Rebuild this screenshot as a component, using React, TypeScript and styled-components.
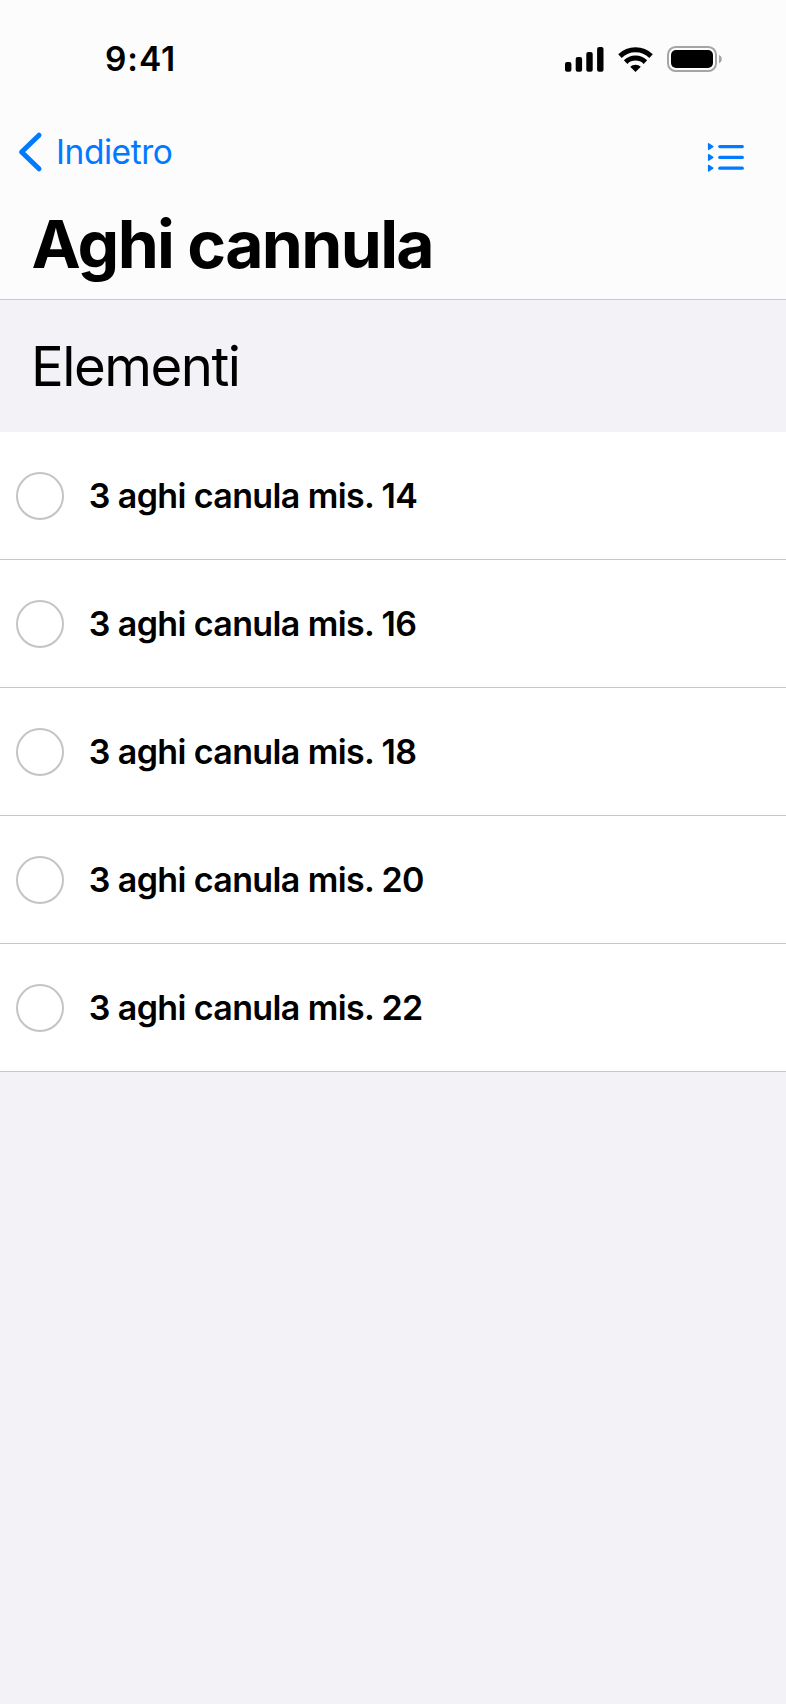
import React, { useState } from 'react';
import styled, { createGlobalStyle } from 'styled-components';

const GlobalStyle = createGlobalStyle`
  *, *::before, *::after { box-sizing: border-box; }
  body {
    margin: 0;
    background: #f2f2f7;
    font-family: Inter, "Liberation Sans", sans-serif;
    color: #000;
  }
`;

const Screen = styled.main`
  display: flex;
  flex-direction: column;
  width: 786px;
  min-height: 1704px;
  background: #f2f2f7;
`;

const Header = styled.header`
  height: 300px;
  background: #fcfcfc;
  border-bottom: 1px solid #c8c8ca;
`;

const StatusBar = styled.div`
  display: flex;
  justify-content: space-between;
  align-items: flex-start;
  height: 130px;
  padding: 36px 64px 0 105px;
`;

const Time = styled.span`
  padding-top: 1px;
  font-size: 33.5px;
  font-weight: 600;
  line-height: 44px;
  letter-spacing: 0.9px;
`;

const StatusIcons = styled.div`
  display: flex;
  gap: 14px;
  padding-top: 10px;

  svg { display: block; }
`;

const NavBar = styled.nav`
  display: flex;
  justify-content: space-between;
  height: 60px;
  padding: 0 42px 0 18px;
  color: #007aff;
`;

const NavButton = styled.button`
  display: flex;
  padding: 0;
  border: 0;
  background: none;
  color: inherit;
  font: inherit;
`;

const BackButton = styled(NavButton)`
  gap: 13px;
  height: 44px;
  align-items: center;
  font-size: 33.5px;
  line-height: 44px;
  letter-spacing: -0.45px;
`;

const ListButton = styled(NavButton)`
  padding-top: 12px;
`;

const Title = styled.h1`
  margin: 14px 0 0;
  padding-left: 31.5px;
  font-size: 66px;
  font-weight: 700;
  line-height: 80px;
  letter-spacing: -1.65px;
`;

const SectionTitle = styled.h2`
  margin: 0;
  padding-left: 31px;
  font-size: 54.5px;
  font-weight: 400;
  line-height: 132px;
  letter-spacing: -1.5px;
`;

const List = styled.ul`
  margin: 0;
  padding: 0;
  list-style: none;
  background: #fff;
`;

const Row = styled.li`
  height: 128px;
  padding: 40px 16px 0;
  border-bottom: 1px solid #c6c6c8;
`;

const RowLabel = styled.label`
  display: flex;
  align-items: center;
  gap: 24.8px;
  font-size: 34px;
  font-weight: 600;
  line-height: 48px;
  letter-spacing: -0.62px;
`;

const Radio = styled.input`
  appearance: none;
  flex: none;
  width: 48px;
  height: 48px;
  margin: 0;
  border: 2px solid #c4c4c6;
  border-radius: 50%;
  background: #fff;

  &:checked { background: #007aff; border-color: #007aff; }
`;

const SignalIcon = () => (
  <svg width="39" height="26" viewBox="0 0 39 26">
    <rect x="0" y="16" width="6.4" height="9.7" rx="2" />
    <rect x="10.7" y="11" width="6.4" height="14.7" rx="2" />
    <rect x="21.3" y="6" width="6.4" height="19.7" rx="2" />
    <rect x="32.1" y="1" width="6.4" height="24.7" rx="2" />
  </svg>
);

const WifiIcon = () => (
  <svg width="35" height="26" viewBox="0 0 35 26">
    <g fill="none" stroke="#000" strokeWidth="5">
      <path d="M1.95 10.1A22.4 22.4 0 0 1 33.05 10.1" />
      <path d="M7.6 16.1A14.2 14.2 0 0 1 27.4 16.1" />
    </g>
    <path d="M17.5 26L12.2 20.8A7.8 7.8 0 0 1 22.8 20.8Z" />
  </svg>
);

const BatteryIcon = () => (
  <svg width="55" height="26" viewBox="0 0 55 26">
    <rect x="1" y="1" width="48" height="24" rx="7.6" fill="none" stroke="#a5a5a5" strokeWidth="2" />
    <rect x="4" y="4" width="42" height="18" rx="5" />
    <path d="M52 9V17.2A4.4 4.4 0 0 0 52 9Z" fill="#a5a5a5" />
  </svg>
);

const BackIcon = () => (
  <svg width="25" height="44" viewBox="0 0 25 44">
    <path d="M21 5.2L3.6 22L21 38.8" fill="none" stroke="currentColor" strokeWidth="5" strokeLinecap="round" strokeLinejoin="round" />
  </svg>
);

const ListIcon = () => (
  <svg width="38" height="32" viewBox="0 0 38 32">
    {[4.6, 15.4, 26.2].map((y) => (
      <g key={y} stroke="currentColor" strokeLinecap="round" strokeLinejoin="round">
        <path d={`M2.6 ${y - 2.8}L6.8 ${y}L2.6 ${y + 2.8}Z`} fill="currentColor" strokeWidth="1.4" />
        <path d={`M13.8 ${y}H36.3`} strokeWidth="3.2" />
      </g>
    ))}
  </svg>
);

const items = [14, 16, 18, 20, 22].map((size) => `3 aghi canula mis. ${size}`);

export default function App() {
  const [checked, setChecked] = useState<string[]>([]);
  const toggle = (item: string) =>
    setChecked((prev) => (prev.includes(item) ? prev.filter((i) => i !== item) : [...prev, item]));

  return (
    <Screen>
      <GlobalStyle />
      <Header>
        <StatusBar>
          <Time>9:41</Time>
          <StatusIcons>
            <SignalIcon />
            <WifiIcon />
            <BatteryIcon />
          </StatusIcons>
        </StatusBar>
        <NavBar>
          <BackButton type="button">
            <BackIcon />
            Indietro
          </BackButton>
          <ListButton type="button">
            <ListIcon />
          </ListButton>
        </NavBar>
        <Title>Aghi cannula</Title>
      </Header>
      <SectionTitle>Elementi</SectionTitle>
      <List>
        {items.map((item) => (
          <Row key={item}>
            <RowLabel>
              <Radio type="checkbox" checked={checked.includes(item)} onChange={() => toggle(item)} />
              {item}
            </RowLabel>
          </Row>
        ))}
      </List>
    </Screen>
  );
}
